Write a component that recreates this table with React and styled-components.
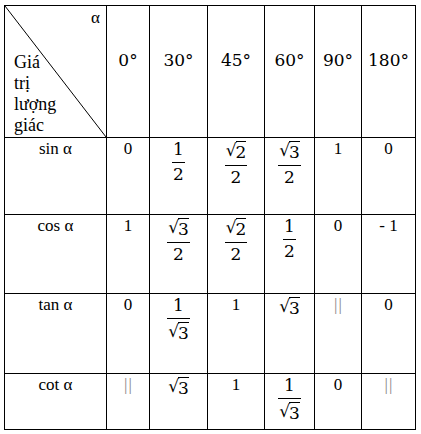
import React from "react";
import styled, { createGlobalStyle } from "styled-components";

const GlobalStyle = createGlobalStyle`
  html, body {
    margin: 0;
    padding: 0;
    background: #fff;
  }
  body {
    font-family: "Liberation Serif", "Times New Roman", serif;
    color: #000;
  }
`;

const Page = styled.div`
  padding: 5px 0 0 4px;
`;

const Table = styled.table`
  border-collapse: separate;
  border-spacing: 0;
  table-layout: fixed;
  width: 412px;
  border-left: 1px solid #000;
  border-top: 1px solid #000;
`;

const Row = styled.tr`
  height: ${(p) => p.$h}px;
`;

const Cell = styled.td`
  box-sizing: border-box;
  border-right: 1px solid #000;
  border-bottom: 1px solid #000;
  padding: 1px 0 0;
  vertical-align: top;
  text-align: center;
  font-size: 17px;
  line-height: 20px;
`;

const CornerCell = styled(Cell)`
  position: relative;
  vertical-align: bottom;
  text-align: left;
  padding: 0 0 1px 9px;
  font-size: 18px;
  line-height: 21px;
`;

const Diagonal = styled.svg`
  position: absolute;
  inset: 0;
  width: 100%;
  height: 100%;
  pointer-events: none;
`;

const Alpha = styled.span`
  position: absolute;
  top: 1px;
  right: 6px;
  font-size: 17px;
  line-height: 21px;
`;

const CornerLabel = styled.div`
  display: flex;
  flex-direction: column;
`;

const AngleCell = styled(Cell)`
  padding-top: 44px;
  font-family: "DejaVu Serif", serif;
  font-size: 17px;
  line-height: 20px;
`;

const Undefined = styled.span`
  color: #858585;
  letter-spacing: 1.2px;
  padding-left: 1.2px;
`;

const Math = styled.span`
  font-family: "DejaVu Serif", serif;
  font-size: 17px;
`;

const Frac = styled(Math)`
  display: inline-flex;
  flex-direction: column;
  align-items: stretch;
  vertical-align: top;
  margin-top: 2px;
  line-height: 17px;
`;

const Num = styled.span`
  display: flex;
  justify-content: center;
  padding: 0 1px 4px;
  border-bottom: 1px solid #000;
`;

const Den = styled.span`
  display: flex;
  justify-content: center;
  padding: 3px 1px 0;
`;

const SqrtWrap = styled(Math)`
  display: inline-flex;
  align-items: flex-start;
  vertical-align: top;
  line-height: 17px;
  margin-top: ${(p) => (p.$alone ? 2 : 0)}px;
`;

const Radical = styled.span`
  font-family: "DejaVu Sans", sans-serif;
  font-size: 17px;
  line-height: 17px;
  margin-top: 1px;
`;

const Radicand = styled.span`
  border-top: 1px solid #000;
  padding-top: 2px;
  margin-left: -1px;
`;

const angles = ["0°", "30°", "45°", "60°", "90°", "180°"];
const widths = [102, 43, 58, 57, 50, 47, 54];

const rows = [
  { name: "sin α", h: 77, vals: ["0", "1/2", "r2/2", "r3/2", "1", "0"] },
  { name: "cos α", h: 79, vals: ["1", "r3/2", "r2/2", "1/2", "0", "- 1"] },
  { name: "tan α", h: 80, vals: ["0", "1/r3", "1", "r3", "||", "0"] },
  { name: "cot α", h: 56, vals: ["||", "r3", "1", "1/r3", "0", "||"] },
];

function Sqrt({ n, alone }) {
  return (
    <SqrtWrap $alone={alone}>
      <Radical>√</Radical>
      <Radicand>{n}</Radicand>
    </SqrtWrap>
  );
}

function Part({ s }) {
  if (s.startsWith("r")) return <Sqrt n={s.slice(1)} />;
  return <span>{s}</span>;
}

function Value({ v }) {
  if (v === "||") return <Undefined>||</Undefined>;
  if (v.includes("/")) {
    const [a, b] = v.split("/");
    return (
      <Frac>
        <Num>
          <Part s={a} />
        </Num>
        <Den>
          <Part s={b} />
        </Den>
      </Frac>
    );
  }
  if (v.startsWith("r")) return <Sqrt n={v.slice(1)} alone />;
  return <span>{v}</span>;
}

export default function App() {
  return (
    <Page>
      <GlobalStyle />
      <Table>
        <colgroup>
          {widths.map((w, i) => (
            <col key={i} style={{ width: w }} />
          ))}
        </colgroup>
        <tbody>
          <Row $h={132}>
            <CornerCell>
              <Diagonal preserveAspectRatio="none" viewBox="0 0 100 100">
                <line
                  x1="0"
                  y1="0"
                  x2="100"
                  y2="100"
                  stroke="#000"
                  strokeWidth="1"
                  vectorEffect="non-scaling-stroke"
                />
              </Diagonal>
              <Alpha>α</Alpha>
              <CornerLabel>
                <span>Giá</span>
                <span>trị</span>
                <span>lượng</span>
                <span>giác</span>
              </CornerLabel>
            </CornerCell>
            {angles.map((a) => (
              <AngleCell key={a}>{a}</AngleCell>
            ))}
          </Row>
          {rows.map((r) => (
            <Row key={r.name} $h={r.h}>
              <Cell>{r.name}</Cell>
              {r.vals.map((v, i) => (
                <Cell key={i}>
                  <Value v={v} />
                </Cell>
              ))}
            </Row>
          ))}
        </tbody>
      </Table>
    </Page>
  );
}
